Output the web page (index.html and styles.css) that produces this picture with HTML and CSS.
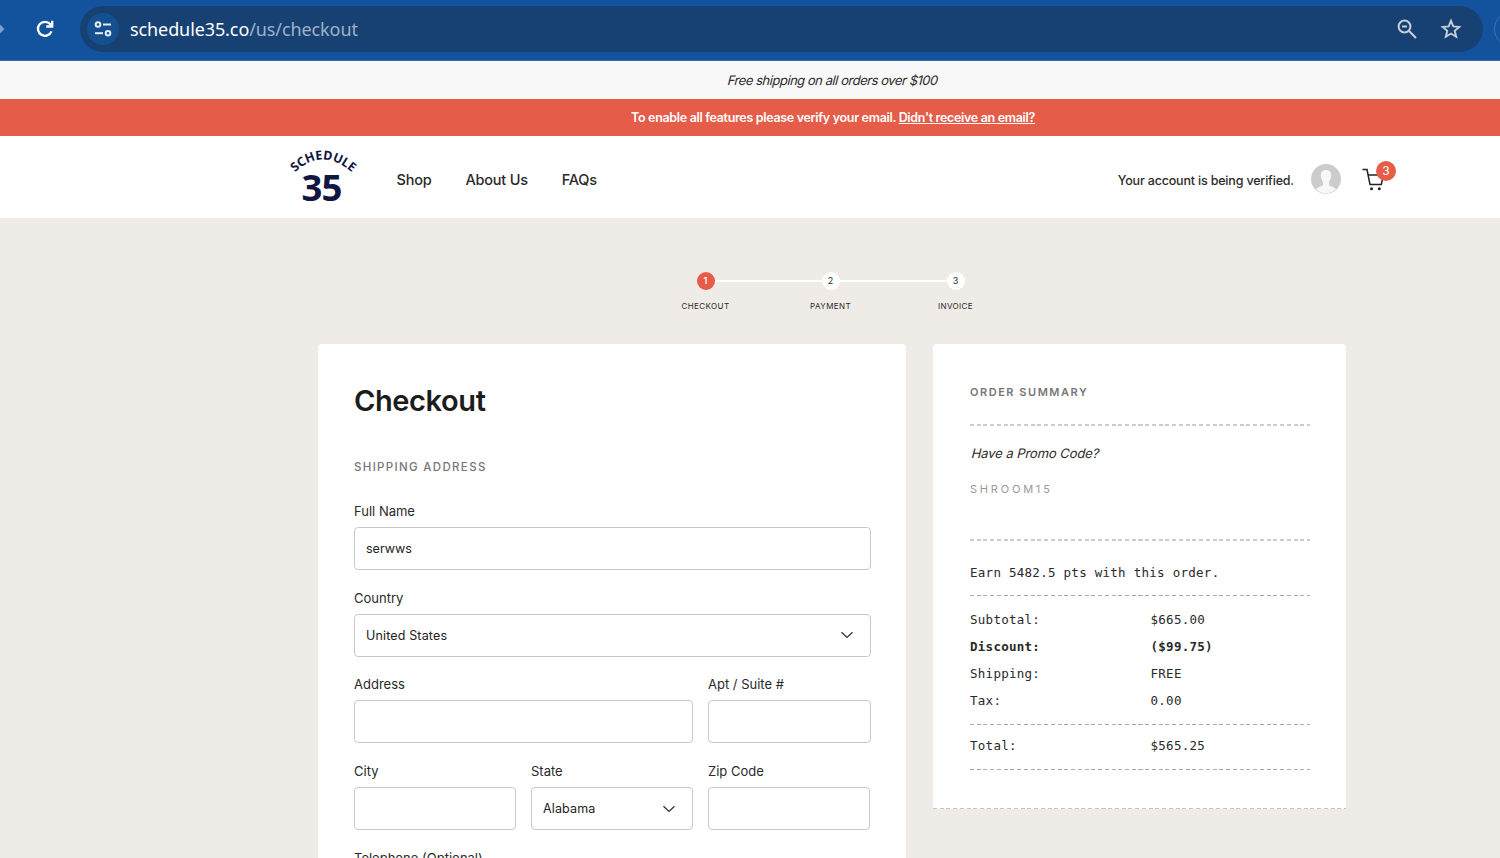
FILE: index.html
```html
<!DOCTYPE html>
<html lang="en">
<head>
  <meta charset="UTF-8">
  <meta name="viewport" content="width=device-width, initial-scale=1.0">
  <title>Checkout - Schedule 35</title>
  <link rel="stylesheet" href="styles.css">
</head>
<body>

<div class="browser-bar">
  <svg class="forward" width="6" height="12" viewBox="0 0 6 12"><path d="M0 1.500 4.500 6 0 10.500z" fill="#7d9fca"/></svg>
  <svg class="reload" width="20" height="20" viewBox="0 0 20 20" fill="none" stroke="#fff" stroke-width="2.300"><path d="M16.500 12.300A7 7 0 1 1 15.300 5.300L17 7.200"/><path d="M17.200 1.800V7.500H11.300"/></svg>
  <div class="address-bar">
    <span class="site-info">
      <svg width="20" height="20" viewBox="0 0 20 20" fill="none" stroke="#e6edf6" stroke-width="2"><circle cx="5" cy="5.500" r="2.300"/><path d="M10 5.500H18"/><circle cx="15" cy="14.200" r="2.300"/><path d="M2 14.200H10"/></svg>
    </span>
    <span class="url">schedule35.co<span class="path">/us/checkout</span></span>
    <svg class="zoom-icon" width="22" height="22" viewBox="0 0 22 22" fill="none" stroke="#c5cedb" stroke-width="2"><circle cx="8.500" cy="8.500" r="5.900"/><path d="M12.800 12.800 20 20M6 8.500H11"/></svg>
    <svg class="star-icon" width="22" height="22" viewBox="0 0 22 22" fill="none" stroke="#c5cedb" stroke-width="1.900"><path d="M11 2.800 13.300 8.400 19.300 8.900 14.700 12.800 16.200 18.700 11 15.500 5.800 18.700 7.300 12.800 2.700 8.900 8.700 8.400Z"/></svg>
  </div>
  <div class="profile"></div>
</div>

<div class="page">
  <div class="shipping-bar"><span class="slanted">Free shipping on all orders over $100</span></div>
  <div class="verify-bar"><span>To enable all features please verify your email. <a href="#">Didn't receive an email?</a></span></div>

  <header class="header">
    <svg class="logo" width="76" height="64" viewBox="0 0 76 64">
      <path id="arc" d="M11 25.500Q38 -0.500 68 25.500" fill="none"/>
      <text class="logo-name"><textPath href="#arc" textLength="64">SCHEDULE</textPath></text>
      <text class="logo-number" x="17.500" y="53.500" textLength="41">35</text>
    </svg>
    <nav class="nav">
      <a href="#">Shop</a>
      <a href="#">About Us</a>
      <a href="#">FAQs</a>
    </nav>
    <span class="account-status">Your account is being verified.</span>
    <svg class="avatar" width="30" height="30" viewBox="0 0 30 30"><circle cx="15" cy="15" r="15" fill="#ccc"/><path d="M15 6C11.500 6 9.700 8.300 9.800 11.800C9.900 14.400 11 16.500 12 17.600V20.500C11.500 22.500 7.500 22.300 5 25.300A14.300 14.300 0 0 0 25 25.300C22.500 22.300 18.500 22.500 18 20.500V17.600C19 16.500 20.100 14.400 20.200 11.800C20.300 8.300 18.500 6 15 6Z" fill="#f7f7f7"/></svg>
    <div class="cart">
      <svg width="24" height="24" viewBox="0 0 24 24" fill="none" stroke="#222" stroke-width="1.500"><path d="M0.500 2.500H5L8 17.500H19.300L21.500 8H6.100"/><circle cx="9.500" cy="21.700" r="1.500" fill="#222" stroke="none"/><circle cx="17.300" cy="21.700" r="1.500" fill="#222" stroke="none"/></svg>
      <span class="cart-count">3</span>
    </div>
  </header>

  <main class="main">
    <ol class="steps">
      <li class="active"><span class="dot">1</span><span class="step-name">CHECKOUT</span></li>
      <li><span class="dot">2</span><span class="step-name">PAYMENT</span></li>
      <li><span class="dot">3</span><span class="step-name">INVOICE</span></li>
    </ol>

    <div class="columns">
      <form class="card checkout">
        <h1>Checkout</h1>
        <h2>SHIPPING ADDRESS</h2>
        <div class="row">
          <div class="field">
            <label for="name">Full Name</label>
            <input type="text" id="name" value="serwws">
          </div>
        </div>
        <div class="row">
          <div class="field">
            <label for="country">Country</label>
            <div class="select-box">
              <select id="country"><option>United States</option></select>
              <svg class="chevron" width="14" height="8" viewBox="0 0 14 8"><path d="M1.500 1.200 7 6.400 12.500 1.200"/></svg>
            </div>
          </div>
        </div>
        <div class="row address">
          <div class="field">
            <label for="address">Address</label>
            <input type="text" id="address">
          </div>
          <div class="field">
            <label for="apt">Apt / Suite #</label>
            <input type="text" id="apt">
          </div>
        </div>
        <div class="row city">
          <div class="field">
            <label for="city">City</label>
            <input type="text" id="city">
          </div>
          <div class="field">
            <label for="state">State</label>
            <div class="select-box">
              <select id="state"><option>Alabama</option></select>
              <svg class="chevron" width="14" height="8" viewBox="0 0 14 8"><path d="M1.500 1.200 7 6.400 12.500 1.200"/></svg>
            </div>
          </div>
          <div class="field">
            <label for="zip">Zip Code</label>
            <input type="text" id="zip">
          </div>
        </div>
        <div class="row">
          <div class="field">
            <label for="phone">Telephone (Optional)</label>
            <input type="text" id="phone">
          </div>
        </div>
      </form>

      <aside class="card summary">
        <h2>ORDER SUMMARY</h2>
        <div class="dashes thick"></div>
        <div class="promo">
          <p class="promo-title"><span class="slanted">Have a Promo Code?</span></p>
          <p class="promo-code">SHROOM15</p>
        </div>
        <div class="dashes thick"></div>
        <p class="points">Earn 5482.5 pts with this order.</p>
        <div class="dashes"></div>
        <dl class="totals">
          <dt>Subtotal:</dt><dd>$665.00</dd>
          <dt class="discount">Discount:</dt><dd class="discount">($99.75)</dd>
          <dt>Shipping:</dt><dd>FREE</dd>
          <dt>Tax:</dt><dd>0.00</dd>
        </dl>
        <div class="dashes"></div>
        <dl class="totals total">
          <dt>Total:</dt><dd>$565.25</dd>
        </dl>
        <div class="dashes"></div>
        <div class="dashes card-edge"></div>
      </aside>
    </div>
  </main>
</div>

</body>
</html>
```
FILE: styles.css
```css
* {
  box-sizing: border-box;
}
html {
  overflow: hidden;
}
body {
  margin: 0;
  height: 858px;
  overflow: hidden;
  background-color: #efebe7;
  color: #2a2a2a;
  font-family: Inter, sans-serif;
  font-size: 13px;
}
h1, h2, p, dl, dd, ol {
  margin: 0;
  padding: 0;
}
a {
  color: inherit;
  text-decoration: none;
}
svg {
  flex: none;
}
.slanted {
  display: inline-block;
  transform: skewX(-14deg);
}

/* browser bar */
.browser-bar {
  display: flex;
  align-items: center;
  height: 61px;
  padding-bottom: 3px;
  background-color: #13539e;
  border-bottom: 1px solid #3d6aa8;
  overflow: hidden;
}
.reload {
  margin-left: 29px;
  margin-right: 25px;
}
.address-bar {
  display: flex;
  flex: none;
  align-items: center;
  width: 1403px;
  height: 46px;
  padding: 0 21px 0 7px;
  border-radius: 23px;
  background-color: #184173;
}
.site-info {
  display: flex;
  align-items: center;
  justify-content: center;
  width: 32px;
  height: 32px;
  margin-right: 11px;
  border-radius: 50%;
  background-color: #14508f;
}
.url {
  flex: 1;
  color: #fff;
  font-family: "Noto Sans", sans-serif;
  font-size: 18px;
  letter-spacing: -0.100px;
}
.path {
  color: #9fb2ca;
}
.zoom-icon {
  margin-right: 22px;
}
.profile {
  flex: none;
  width: 36px;
  height: 36px;
  margin-left: 11px;
  border: 1px solid #3e72b1;
  border-radius: 50%;
}

/* the shop is wider than the window */
.page {
  width: 1666px;
}
.shipping-bar,
.verify-bar {
  display: flex;
  align-items: center;
  justify-content: center;
}
.shipping-bar {
  height: 38px;
  background-color: #f8f8f8;
  letter-spacing: -0.470px;
}
.verify-bar {
  height: 37px;
  background-color: #e55c48;
  color: #fff;
  font-size: 12.500px;
  font-weight: 600;
  letter-spacing: -0.320px;
}
.verify-bar a {
  text-decoration: underline;
}
.header {
  display: flex;
  align-items: center;
  height: 82px;
  padding: 4px 264px 0 284px;
  background-color: #fff;
}
.logo {
  margin-right: 36.500px;
}
.logo-name {
  fill: #10163f;
  font: 700 12.500px "Noto Sans", sans-serif;
}
.logo-number {
  fill: #10163f;
  font: 700 36.500px "Noto Sans", sans-serif;
}
.nav {
  display: flex;
  flex: 1;
  gap: 34px;
  font-size: 14.500px;
  font-weight: 500;
  letter-spacing: -0.220px;
}
.account-status {
  margin: 2px 17px 0 0;
  font-size: 12.500px;
  font-weight: 500;
  letter-spacing: -0.180px;
}
.avatar {
  margin-right: 21px;
}
.cart {
  position: relative;
  width: 40px;
  height: 24px;
}
.cart-count {
  position: absolute;
  top: -6px;
  left: 14px;
  width: 20px;
  height: 20px;
  border-radius: 50%;
  background-color: #e55c48;
  color: #fff;
  font-size: 12px;
  line-height: 19px;
  text-align: center;
}

/* steps */
.main {
  padding: 54px 320px 0 318px;
}
.steps {
  display: flex;
  width: 375px;
  height: 72px;
  margin: 0 0 0 325px;
  list-style: none;
  font-size: 8px;
}
.steps li {
  display: flex;
  flex: 1;
  flex-wrap: wrap;
  align-content: flex-start;
  justify-content: center;
  text-align: center;
}
.steps li::before,
.steps li::after {
  content: "";
  flex: 1;
  height: 2px;
  margin-top: 8px;
  background-color: #fff;
}
.steps li::after {
  order: 1;
}
.steps li:first-child::before,
.steps li:last-child::after {
  background: none;
}
.step-name {
  order: 2;
  width: 100%;
  margin-top: 11px;
  line-height: 10px;
  letter-spacing: 0.400px;
}
.dot {
  width: 18px;
  height: 18px;
  border-radius: 50%;
  background-color: #fff;
  font-size: 9px;
  line-height: 17px;
}
.active .dot {
  background-color: #e55c48;
  color: #fff;
  font-weight: 600;
}

/* cards */
.columns {
  display: flex;
  align-items: flex-start;
  gap: 27px;
}
.card {
  background-color: #fff;
  border-radius: 4px;
}
.card h2 {
  color: #777;
  font-size: 11.500px;
  font-weight: 500;
  line-height: 16px;
  letter-spacing: 1.330px;
}
.checkout {
  width: 588px;
  padding: 36px 35px 30px 36px;
}
.checkout h1 {
  color: #1c1c1c;
  font-size: 29px;
  font-weight: 600;
  line-height: 41px;
  letter-spacing: -0.400px;
}
.checkout h2 {
  margin: 38px 0 26px;
}
.row {
  display: flex;
  gap: 15px;
  margin-bottom: 17.700px;
}
.field {
  flex: 1;
}
.address .field:last-child {
  flex: none;
  width: 163px;
}
.field label {
  display: block;
  margin-bottom: 6px;
  line-height: 20px;
}
.field input,
.field select {
  display: block;
  width: 100%;
  height: 43px;
  padding: 0 11px;
  border: 1px solid #c9c9c9;
  border-radius: 4px;
  background-color: #fff;
  color: #222;
  font-family: Inter, sans-serif;
  font-size: 12.500px;
  appearance: none;
}
.field select {
  letter-spacing: 0.150px;
}
.city {
  padding-right: 1px;
}
.select-box {
  display: grid;
  align-items: center;
}
.select-box > * {
  grid-area: 1 / 1;
}
.chevron {
  justify-self: end;
  margin-right: 17px;
  fill: none;
  stroke: #333;
  stroke-width: 1.300;
  pointer-events: none;
}

/* order summary */
.summary {
  width: 413px;
  height: 465px;
  padding: 40px 36px 0 37px;
  border-radius: 4px 4px 0 0;
}
.summary h2 {
  margin-bottom: 24px;
  font-size: 11px;
  font-weight: 600;
  letter-spacing: 1.530px;
}
.dashes {
  height: 1px;
  background: repeating-linear-gradient(to right, #aaa 0 4px, transparent 4px 6.740px);
}
.dashes.thick {
  height: 2px;
  background: repeating-linear-gradient(to right, #ccc 0 4px, transparent 4px 6.740px);
}
.promo {
  height: 113px;
  padding-top: 17px;
}
.promo-title {
  padding-left: 2px;
  line-height: 20px;
  letter-spacing: -0.080px;
}
.promo-code {
  margin-top: 17px;
  color: #999;
  font-size: 11px;
  line-height: 18px;
  letter-spacing: 2.800px;
}
.points,
.totals {
  font-family: "DejaVu Sans Mono", monospace;
  font-size: 12.500px;
  letter-spacing: 0.270px;
}
.points {
  padding: 22px 0 12px;
  line-height: 20px;
}
.totals {
  display: grid;
  grid-template-columns: 180.500px 1fr;
  padding: 10px 0 10px;
  line-height: 27px;
}
.totals.total {
  padding: 7px 0 10px;
}
.discount {
  font-weight: bold;
}
.dashes.card-edge {
  margin: 38px -36px 0 -37px;
  background: repeating-linear-gradient(to right, #c4c4c4 0 4px, transparent 4px 6.740px);
}
```
